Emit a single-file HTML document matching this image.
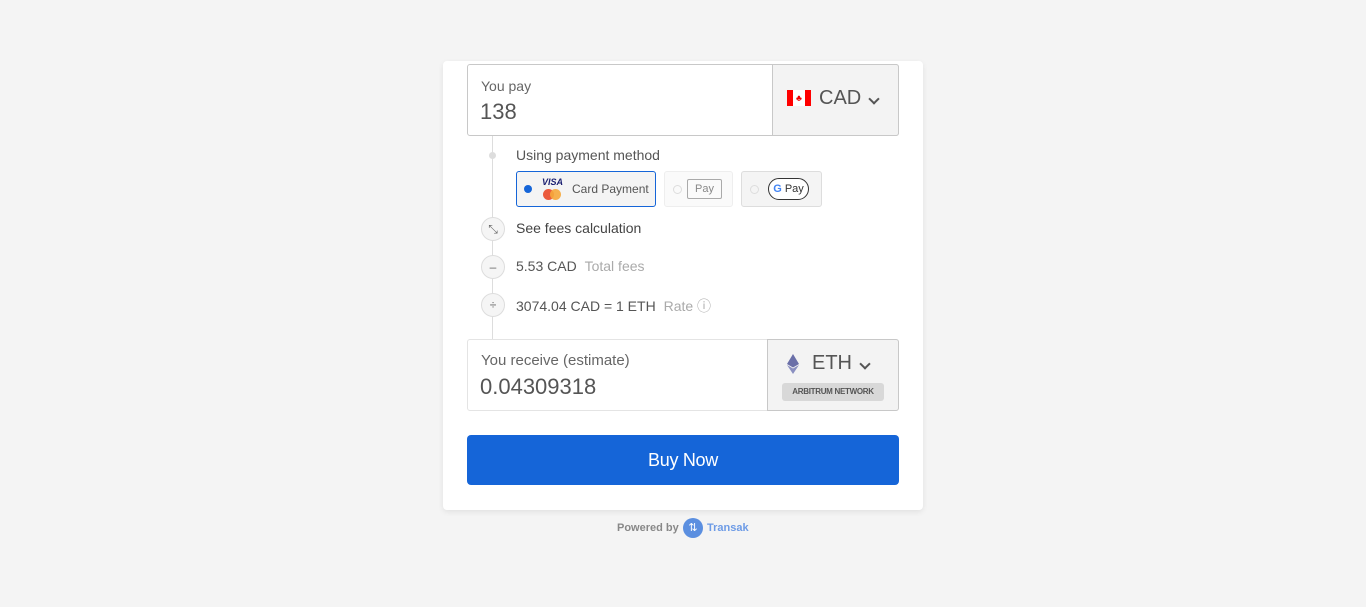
<!DOCTYPE html>
<html><head><style>
*{box-sizing:border-box;margin:0;padding:0}
body{width:1366px;height:607px;background:#f4f4f4;font-family:"Liberation Sans",sans-serif;position:relative;overflow:hidden;color:#555}
.card{position:absolute;left:443px;top:61px;width:480px;height:449px;background:#fff;border-radius:4px;box-shadow:0 2px 6px rgba(0,0,0,.08)}
.abs{position:absolute}
.box{position:absolute;border:1px solid #c8c8c8;border-radius:3px;background:#fff}
.cur{position:absolute;background:#f3f3f3;border:1px solid #c8c8c8;border-radius:0 3px 3px 0}
.circ{position:absolute;left:481px;width:24px;height:24px;border-radius:50%;border:1px solid #ddd;background:#f5f5f5;text-align:center;font-size:12px;line-height:22px;color:#666}
.chev{display:inline-block;width:8px;height:8px;border-right:2px solid #555;border-bottom:2px solid #555;transform:rotate(45deg)}
.pm{position:absolute;top:171px;height:36px;border-radius:3px}
.rad{position:absolute;left:8px;top:13px;width:9px;height:9px;border-radius:50%;border:1px solid #ddd}
</style></head><body>
<div class="card"></div>
<div class="box" style="left:467px;top:64px;width:432px;height:72px"></div>
<div class="cur" style="left:772px;top:64px;width:127px;height:72px"></div>
<div class="abs" style="left:481px;top:78px;font-size:14px;color:#666">You pay</div>
<div class="abs" style="left:480px;top:99px;font-size:22px;color:#555">138</div>
<div class="abs" style="left:787px;top:90px;width:24px;height:16px;background:#f00"><div style="position:absolute;left:6px;top:0;width:12px;height:16px;background:#fff;color:#e00;font-size:9px;text-align:center;line-height:16px">♣</div></div>
<div class="abs" style="left:819px;top:87px;font-size:20px;color:#555">CAD</div>
<div class="abs" style="left:870px;top:90px"><span class="chev"></span></div>

<div class="abs" style="left:492px;top:136px;width:1px;height:203px;background:#ddd"></div>
<div class="abs" style="left:489px;top:152px;width:7px;height:7px;border-radius:50%;background:#ddd"></div>
<div class="abs" style="left:516px;top:147px;font-size:14px;color:#555">Using payment method</div>

<div class="pm" style="left:516px;width:140px;border:1px solid #1565d8;background:#f4f4f4">
<div class="rad" style="border:none;background:#1565d8;left:7px;width:8px;height:8px;top:13px"></div>
<div class="abs" style="left:25px;top:5px;font-size:9px;font-weight:bold;font-style:italic;color:#1a1f71">VISA</div>
<div class="abs" style="left:26px;top:17px;width:11px;height:11px;border-radius:50%;background:#eb5a3c"></div>
<div class="abs" style="left:33px;top:17px;width:11px;height:11px;border-radius:50%;background:#f6a93b;opacity:.9"></div>
<div class="abs" style="left:55px;top:10px;font-size:12px;color:#555">Card Payment</div></div>
<div class="pm" style="left:664px;width:69px;border:1px solid #eee;background:#fafafa">
<div class="rad"></div>
<div class="abs" style="left:22px;top:7px;width:35px;height:20px;border:1px solid #aaa;border-radius:2px;font-size:11px;color:#888;text-align:center;line-height:18px"> Pay</div></div>
<div class="pm" style="left:741px;width:81px;border:1px solid #ddd;background:#f4f4f4">
<div class="rad"></div>
<div class="abs" style="left:26px;top:6px;width:41px;height:22px;border:1px solid #333;border-radius:11px;background:#fff;font-size:11px;color:#333;text-align:center;line-height:20px"><b style="color:#4285f4">G</b> Pay</div></div>

<div class="circ" style="top:217px">⤡</div>
<div class="abs" style="left:516px;top:220px;font-size:14px;color:#444">See fees calculation</div>
<div class="circ" style="top:255px">–</div>
<div class="abs" style="left:516px;top:258px;font-size:14px;color:#555">5.53 CAD <span style="color:#aaa;margin-left:4px">Total fees</span></div>
<div class="circ" style="top:293px">÷</div>
<div class="abs" style="left:516px;top:296px;font-size:14px;color:#555">3074.04 CAD = 1 ETH <span style="color:#aaa;margin-left:4px">Rate ⓘ</span></div>

<div class="box" style="left:467px;top:339px;width:432px;height:72px;border-color:#e4e4e4"></div>
<div class="cur" style="left:767px;top:339px;width:132px;height:72px"></div>
<div class="abs" style="left:481px;top:352px;font-size:15px;color:#666">You receive (estimate)</div>
<div class="abs" style="left:480px;top:374px;font-size:22px;color:#555">0.04309318</div>
<svg class="abs" style="left:787px;top:354px" width="12" height="20" viewBox="0 0 12 20"><path d="M6 0L0 10l6 3.5L12 10z" fill="#6a6fa8"/><path d="M6 14.5L0 11l6 9 6-9z" fill="#8a8fc0"/></svg>
<div class="abs" style="left:812px;top:352px;font-size:20px;color:#555">ETH</div>
<div class="abs" style="left:861px;top:355px"><span class="chev"></span></div>
<div class="abs" style="left:782px;top:383px;width:102px;height:18px;background:#d8d8d8;border-radius:3px;font-size:8px;font-weight:bold;color:#555;text-align:center;line-height:18px;letter-spacing:-.3px">ARBITRUM NETWORK</div>

<div class="abs" style="left:467px;top:435px;width:432px;height:50px;background:#1565d8;border-radius:4px;color:#fff;font-size:18px;text-align:center;line-height:50px;letter-spacing:-.3px">Buy Now</div>

<div class="abs" style="left:617px;top:522px;font-size:11px;font-weight:bold;color:#888">Powered by</div>
<div class="abs" style="left:683px;top:518px;width:20px;height:20px;border-radius:50%;background:#5b8fe0;color:#fff;font-size:11px;text-align:center;line-height:20px">⇅</div>
<div class="abs" style="left:707px;top:522px;font-size:11px;font-weight:bold;color:#6d9be6">Transak</div>
</body></html>
